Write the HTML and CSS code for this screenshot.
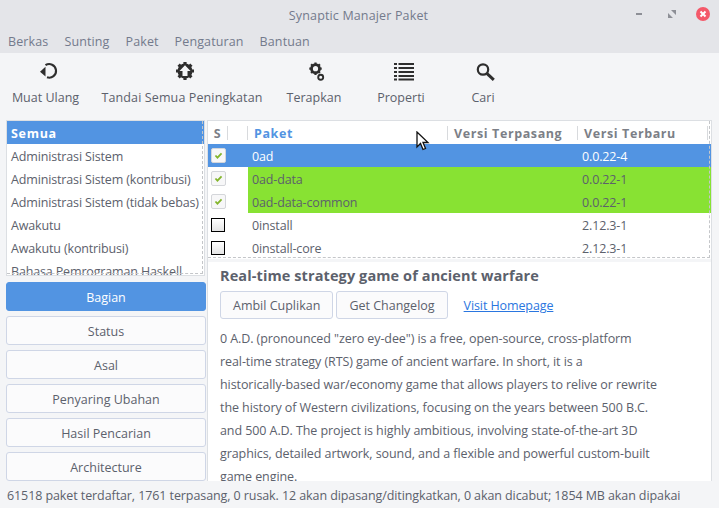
FILE: index.html
```html
<!DOCTYPE html>
<html lang="id">
<head>
    <meta charset="UTF-8">
    <title>Synaptic Manajer Paket</title>
    <link rel="stylesheet" href="styles.css">
</head>
<body>
    <header class="titlebar">
        <span class="title">Synaptic Manajer Paket</span>
        <div class="window-buttons">
            <svg class="win-min" width="8" height="3" viewBox="0 0 8 3"><rect width="6" height="2" x="1" fill="#8d8f96"/></svg>
            <svg class="win-max" width="8" height="8" viewBox="0 0 8 8"><path d="M3 0h5v5zM0 3l5 5H0z" fill="#8d8f96"/></svg>
            <svg class="win-close" width="14" height="14" viewBox="0 0 14 14"><circle cx="7" cy="7" r="7" fill="#f4596a"/><path d="M4.500 4.500l5 5M9.500 4.500l-5 5" stroke="#fff" stroke-width="2"/></svg>
        </div>
    </header>
    <nav class="menubar">
        <span>Berkas</span><span>Sunting</span><span>Paket</span><span>Pengaturan</span><span>Bantuan</span>
    </nav>
    <div class="toolbar">
        <div class="tool tool-reload">
            <svg width="20" height="20" viewBox="0 0 20 20"><path d="M6.500 4.200A6.800 6.800 0 1 1 8 16.300" fill="none" stroke="#2e2e2e" stroke-width="2.100"/><path d="M1 10.800L6.500 5.800v9.800z" fill="#2e2e2e"/></svg>
            <span>Muat Ulang</span>
        </div>
        <div class="tool tool-mark">
            <svg width="20" height="20" viewBox="0 0 20 20"><circle cx="10" cy="10" r="7.500" fill="#2e2e2e"/><path d="M10 1v18M1 10h18M3.600 3.600l12.800 12.800M16.400 3.600L3.600 16.400" stroke="#2e2e2e" stroke-width="3.200"/><path d="M10 4.300l5.500 5.700h-3v5h-5v-5h-3z" fill="#f4f5f7"/></svg>
            <span>Tandai Semua Peningkatan</span>
        </div>
        <div class="tool tool-apply">
            <svg width="20" height="20" viewBox="0 0 20 20"><circle cx="8.500" cy="7.700" r="4" fill="none" stroke="#2e2e2e" stroke-width="2.800"/><path d="M8.500 1.500v12.400M2.300 7.700h12.400M4.100 3.300l8.800 8.800M12.900 3.300l-8.800 8.800" stroke="#2e2e2e" stroke-width="2.200" stroke-dasharray="2.500 7.400"/><circle cx="13.700" cy="16.300" r="2.500" fill="none" stroke="#2e2e2e" stroke-width="1.900"/></svg>
            <span>Terapkan</span>
        </div>
        <div class="tool tool-props">
            <svg width="20" height="20" viewBox="0 0 20 20"><path d="M0 3h3M4.500 3H20M0 7h3M4.500 7H20M0 11h3M4.500 11H20M0 15h3M4.500 15H20M0 18.500h3M4.500 18.500H20" stroke="#2e2e2e" stroke-width="2.200"/></svg>
            <span>Properti</span>
        </div>
        <div class="tool tool-search">
            <svg width="20" height="20" viewBox="0 0 20 20"><circle cx="7" cy="8.500" r="5.200" fill="none" stroke="#2e2e2e" stroke-width="2.200"/><path d="M10.800 12.300l7 6.500" stroke="#2e2e2e" stroke-width="3"/></svg>
            <span>Cari</span>
        </div>
    </div>

    <main class="content">
        <aside class="sidebar">
            <div class="section-list">
                <div class="section-head">Semua</div>
                <div class="section-item">Administrasi Sistem</div>
                <div class="section-item">Administrasi Sistem (kontribusi)</div>
                <div class="section-item">Administrasi Sistem (tidak bebas)</div>
                <div class="section-item">Awakutu</div>
                <div class="section-item">Awakutu (kontribusi)</div>
                <div class="section-item">Bahasa Pemrograman Haskell</div>
            </div>
            <div class="filters">
                <button class="filter filter-active">Bagian</button>
                <button class="filter">Status</button>
                <button class="filter">Asal</button>
                <button class="filter">Penyaring Ubahan</button>
                <button class="filter">Hasil Pencarian</button>
                <button class="filter">Architecture</button>
            </div>
        </aside>

        <section class="right-pane">
            <div class="packages">
                <div class="row row-head">
                    <span class="col-s">S</span>
                    <span class="col-icon"></span>
                    <span class="col-name sorted">Paket</span>
                    <span class="col-inst">Versi Terpasang</span>
                    <span class="col-new">Versi Terbaru</span>
                </div>
                <div class="row row-selected">
                    <span class="col-s"><i class="check"><svg width="9" height="7" viewBox="0 0 10 8"><path d="M1.500 4l2.300 2.500L8.500 1.500" fill="none" stroke="#83b52c" stroke-width="2"/></svg></i></span>
                    <span class="col-icon"></span>
                    <span class="col-name">0ad</span>
                    <span class="col-inst"></span>
                    <span class="col-new">0.0.22-4</span>
                </div>
                <div class="row row-marked">
                    <span class="col-s"><i class="check"><svg width="9" height="7" viewBox="0 0 10 8"><path d="M1.500 4l2.300 2.500L8.500 1.500" fill="none" stroke="#83b52c" stroke-width="2"/></svg></i></span>
                    <span class="col-icon"></span>
                    <span class="col-name">0ad-data</span>
                    <span class="col-inst"></span>
                    <span class="col-new">0.0.22-1</span>
                </div>
                <div class="row row-marked">
                    <span class="col-s"><i class="check"><svg width="9" height="7" viewBox="0 0 10 8"><path d="M1.500 4l2.300 2.500L8.500 1.500" fill="none" stroke="#83b52c" stroke-width="2"/></svg></i></span>
                    <span class="col-icon"></span>
                    <span class="col-name">0ad-data-common</span>
                    <span class="col-inst"></span>
                    <span class="col-new">0.0.22-1</span>
                </div>
                <div class="row">
                    <span class="col-s"><i class="box"></i></span>
                    <span class="col-icon"></span>
                    <span class="col-name">0install</span>
                    <span class="col-inst"></span>
                    <span class="col-new">2.12.3-1</span>
                </div>
                <div class="row">
                    <span class="col-s"><i class="box"></i></span>
                    <span class="col-icon"></span>
                    <span class="col-name">0install-core</span>
                    <span class="col-inst"></span>
                    <span class="col-new">2.12.3-1</span>
                </div>
            </div>
            <div class="details">
                <h1>Real-time strategy game of ancient warfare</h1>
                <div class="detail-actions">
                    <button class="detail-btn">Ambil Cuplikan</button>
                    <button class="detail-btn">Get Changelog</button>
                    <a class="homepage" href="#">Visit Homepage</a>
                </div>
                <p>0 A.D. (pronounced "zero ey-dee") is a free, open-source, cross-platform<br>real-time strategy (RTS) game of ancient warfare. In short, it is a<br>historically-based war/economy game that allows players to relive or rewrite<br>the history of Western civilizations, focusing on the years between 500 B.C.<br>and 500 A.D. The project is highly ambitious, involving state-of-the-art 3D<br>graphics, detailed artwork, sound, and a flexible and powerful custom-built<br>game engine.</p>
            </div>
        </section>
    </main>

    <footer class="statusbar">61518 paket terdaftar, 1761 terpasang, 0 rusak. 12 akan dipasang/ditingkatkan, 0 akan dicabut; 1854 MB akan dipakai</footer>

    <!-- mouse pointer caught in the screenshot -->
    <svg class="cursor" width="14" height="21" viewBox="0 0 14 21"><path d="M1 1v15l3.500-3.500 2.500 6 2.500-1-2.500-6H12z" fill="#fff" stroke="#111" stroke-width="1.300"/></svg>
</body>
</html>
```

FILE: styles.css
```css
* {
    box-sizing: border-box;
}
html, body {
    height: 100%;
}
body {
    margin: 0;
    display: flex;
    flex-direction: column;
    overflow: hidden;
    position: relative;
    background-color: #f4f5f7;
    color: #5c616c;
    font-family: "Open Sans", "Noto Sans", sans-serif;
    font-size: 12.5px;
}
.titlebar {
    height: 29px;
    padding-top: 1px;
    background-color: #e4e5e9;
    display: flex;
    align-items: center;
    justify-content: center;
    position: relative;
}
.title {
    color: #737a8c;
    letter-spacing: 0.15px;
    margin-left: -2px;
}
.window-buttons {
    position: absolute;
    top: 7px;
    right: 9px;
    display: flex;
    align-items: center;
}
.win-min {
    margin-right: 25px;
}
.win-max {
    margin-right: 20px;
}
.menubar {
    height: 24px;
    background-color: #e4e5e9;
    display: flex;
    align-items: flex-start;
    gap: 16px;
    padding: 4px 8px 0;
    color: #737a8c;
    letter-spacing: 0.12px;
}
.toolbar {
    height: 67px;
    display: flex;
}
.tool {
    display: flex;
    flex-direction: column;
    align-items: center;
    padding-top: 8px;
    gap: 8px;
}
.tool svg {
    margin-left: 6px;
}
.tool-reload { width: 91px; }
.tool-mark { width: 182px; letter-spacing: 0.12px; }
.tool-apply { width: 82px; }
.tool-props { width: 92px; }
.tool-search { width: 72px; }
.content {
    height: 361px;
    padding: 0 7px 0 6px;
    display: flex;
    gap: 1px;
}
.sidebar {
    width: 200px;
    display: flex;
    flex-direction: column;
    gap: 6px;
}
.section-list {
    height: 157px;
    width: 199px;
    overflow: hidden;
    position: relative;
    background-color: #fff;
    border: 1px solid #dcdfe3;
}
/* overlay scrollbar trough, dashed over the list */
.section-list::after,
.packages::after {
    content: "";
    position: absolute;
    top: 0;
    left: 0;
    right: 1px;
    bottom: 1px;
    border-right: 1px dashed #c4c6c9;
    border-bottom: 1px dashed #c4c6c9;
}
.section-head {
    height: 23px;
    line-height: 25px;
    padding-left: 4px;
    background-color: #5294e2;
    color: #fff;
    font-weight: 700;
    letter-spacing: 0.7px;
}
.section-item {
    height: 23px;
    line-height: 25px;
    padding-left: 4px;
    white-space: nowrap;
    letter-spacing: -0.15px;
}
.filters {
    display: flex;
    flex-direction: column;
    gap: 5px;
}
.filter {
    height: 29px;
    padding: 1px 0 0;
    background-color: #fbfbfc;
    border: 1px solid #cfd6e6;
    border-radius: 3px;
    color: #5c616c;
    font: inherit;
}
.filter-active {
    background-color: #5294e2;
    border-color: #5294e2;
    color: #fff;
}
.right-pane {
    flex: 1;
    display: flex;
    flex-direction: column;
    border: 1px solid #dcdfe3;
    border-bottom: 0;
}
.packages {
    height: 138px;
    overflow: hidden;
    position: relative;
    background-color: #fff;
    flex-shrink: 0;
}
.row {
    height: 23px;
    display: flex;
    align-items: center;
    letter-spacing: -0.15px;
}
.row span {
    height: 100%;
    display: flex;
    align-items: center;
    flex-shrink: 0;
}
.col-s {
    width: 20px;
    justify-content: center;
}
.col-icon {
    width: 20px;
}
.col-name {
    width: 200px;
    padding: 1px 0 0 4px;
}
.col-inst {
    width: 130px;
    padding: 1px 0 0 4px;
}
.col-new {
    flex: 1 0 auto;
    width: 133px;
    padding: 1px 0 0 4px;
}
.row-head {
    font-weight: 700;
    color: #7c7f87;
    letter-spacing: 0.6px;
    padding-top: 1px;
}
.row-head span {
    height: 14px;
    padding: 0 0 0 6px;
    border-right: 1px solid #d8dadd;
}
.row-head .col-s {
    padding-left: 0;
}
.row-head .col-new {
    width: 130px;
    flex: none;
}
.row-head .sorted {
    color: #5294e2;
}
.row-selected {
    background-color: #5294e2;
    color: #fff;
}
.row-marked .col-name,
.row-marked .col-inst,
.row-marked .col-new {
    background-color: #88e233;
    color: #5c616c;
}
.check {
    width: 15px;
    height: 15px;
    border: 1px solid #d4d6da;
    border-radius: 2px;
    background-color: #f7f7f8;
    display: flex;
    align-items: center;
    justify-content: center;
}
.box {
    width: 14px;
    height: 14px;
    border: 1px solid #000;
    background: linear-gradient(#fff, #e4e4e4);
}
.details {
    flex: 1;
    margin-top: 3px;
    padding: 4px 12px 0;
    background-color: #fff;
    overflow: hidden;
}
.details h1 {
    margin: 0;
    font-size: 14.5px;
    line-height: 20px;
    font-weight: 700;
    letter-spacing: 0.1px;
}
.detail-actions {
    margin-top: 5px;
    display: flex;
    align-items: center;
    gap: 3px;
}
.detail-btn {
    height: 28px;
    padding: 0 12px;
    background-color: #fbfbfc;
    border: 1px solid #cfd6e6;
    border-radius: 3px;
    color: #5c616c;
    font: inherit;
}
.homepage {
    margin-left: 13px;
    color: #2a76e0;
    letter-spacing: -0.1px;
}
.details p {
    margin: 8px 0 0;
    line-height: 23px;
    white-space: nowrap;
    letter-spacing: -0.08px;
}
.statusbar {
    flex: 1;
    padding: 6px 7px 0;
    white-space: nowrap;
    letter-spacing: -0.09px;
}
.cursor {
    position: absolute;
    left: 416px;
    top: 131px;
}
```
